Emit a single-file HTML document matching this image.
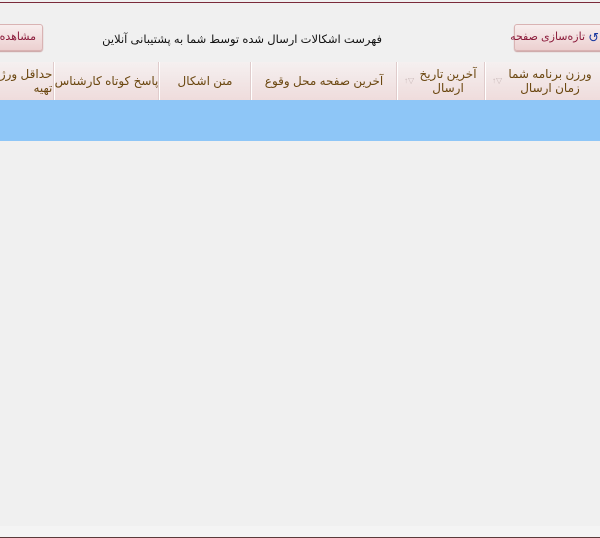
<!DOCTYPE html>
<html><head><meta charset="utf-8"><style>
*{margin:0;padding:0;box-sizing:border-box}
body{width:600px;height:538px;background:#f0f0f0;position:relative;overflow:hidden;font-family:"Liberation Sans","DejaVu Sans",sans-serif;font-size:11px}
.a{position:absolute}
.btn{position:absolute;top:24px;height:27px;border:1px solid #d9b3b3;border-radius:3px;background:linear-gradient(#f8eeee,#ecd0d0);color:#8b1a3a;font-size:11px;line-height:25px;direction:rtl;box-shadow:0 1px 1px #c9a0a0;white-space:nowrap}
.hd{position:absolute;top:62px;height:38px;background:linear-gradient(#f5f0f0,#efdcdc);border-left:1px solid #fff;border-right:1px solid #e0cccc;color:#6b4710;font-size:12px;direction:rtl;text-align:center;display:flex;align-items:center;justify-content:center;line-height:14px;white-space:nowrap;overflow:hidden}
.tri{color:#c8b8b8;font-size:8px;position:absolute;left:6px;top:12px}
</style></head><body>
<div class="a" style="left:0;top:2px;width:600px;height:1px;background:#7a2a3a"></div>
<div class="btn" style="left:-10px;width:53px;padding-right:6px;text-align:right;overflow:hidden">مشاهده</div>
<div class="btn" style="left:514px;width:96px;padding-right:24px;text-align:right"><span style="position:absolute;right:10px;top:0;color:#1a3aa0;font-size:13px">↺</span>تازه‌سازی صفحه</div>
<div class="a" style="left:100px;top:32px;width:282px;direction:rtl;text-align:right;color:#111;font-size:11.5px;white-space:nowrap">فهرست اشکالات ارسال شده توسط شما به پشتیبانی آنلاین</div>
<div class="hd" style="left:-10px;width:64px;justify-content:flex-end;padding-right:12px;text-align:right">حداقل ورژن<br>تهیه</div>
<div class="hd" style="left:54px;width:105px">پاسخ کوتاه کارشناس</div>
<div class="hd" style="left:159px;width:92px">متن اشکال</div>
<div class="hd" style="left:251px;width:146px">آخرین صفحه محل وقوع</div>
<div class="hd" style="left:397px;width:88px"><span class="tri">▽↑</span><span style="padding-left:14px">آخرین تاریخ<br>ارسال</span></div>
<div class="hd" style="left:485px;width:120px"><span class="tri">▽↑</span><span style="padding-left:10px">ورزن برنامه شما<br>زمان ارسال</span></div>
<div class="a" style="left:0;top:100px;width:600px;height:41px;background:#8ec6f7"></div>
<div class="a" style="left:0;top:526px;width:600px;height:11px;background:#f4f4f4"></div>
<div class="a" style="left:0;top:537px;width:600px;height:1px;background:#5a3a3a"></div>
</body></html>
